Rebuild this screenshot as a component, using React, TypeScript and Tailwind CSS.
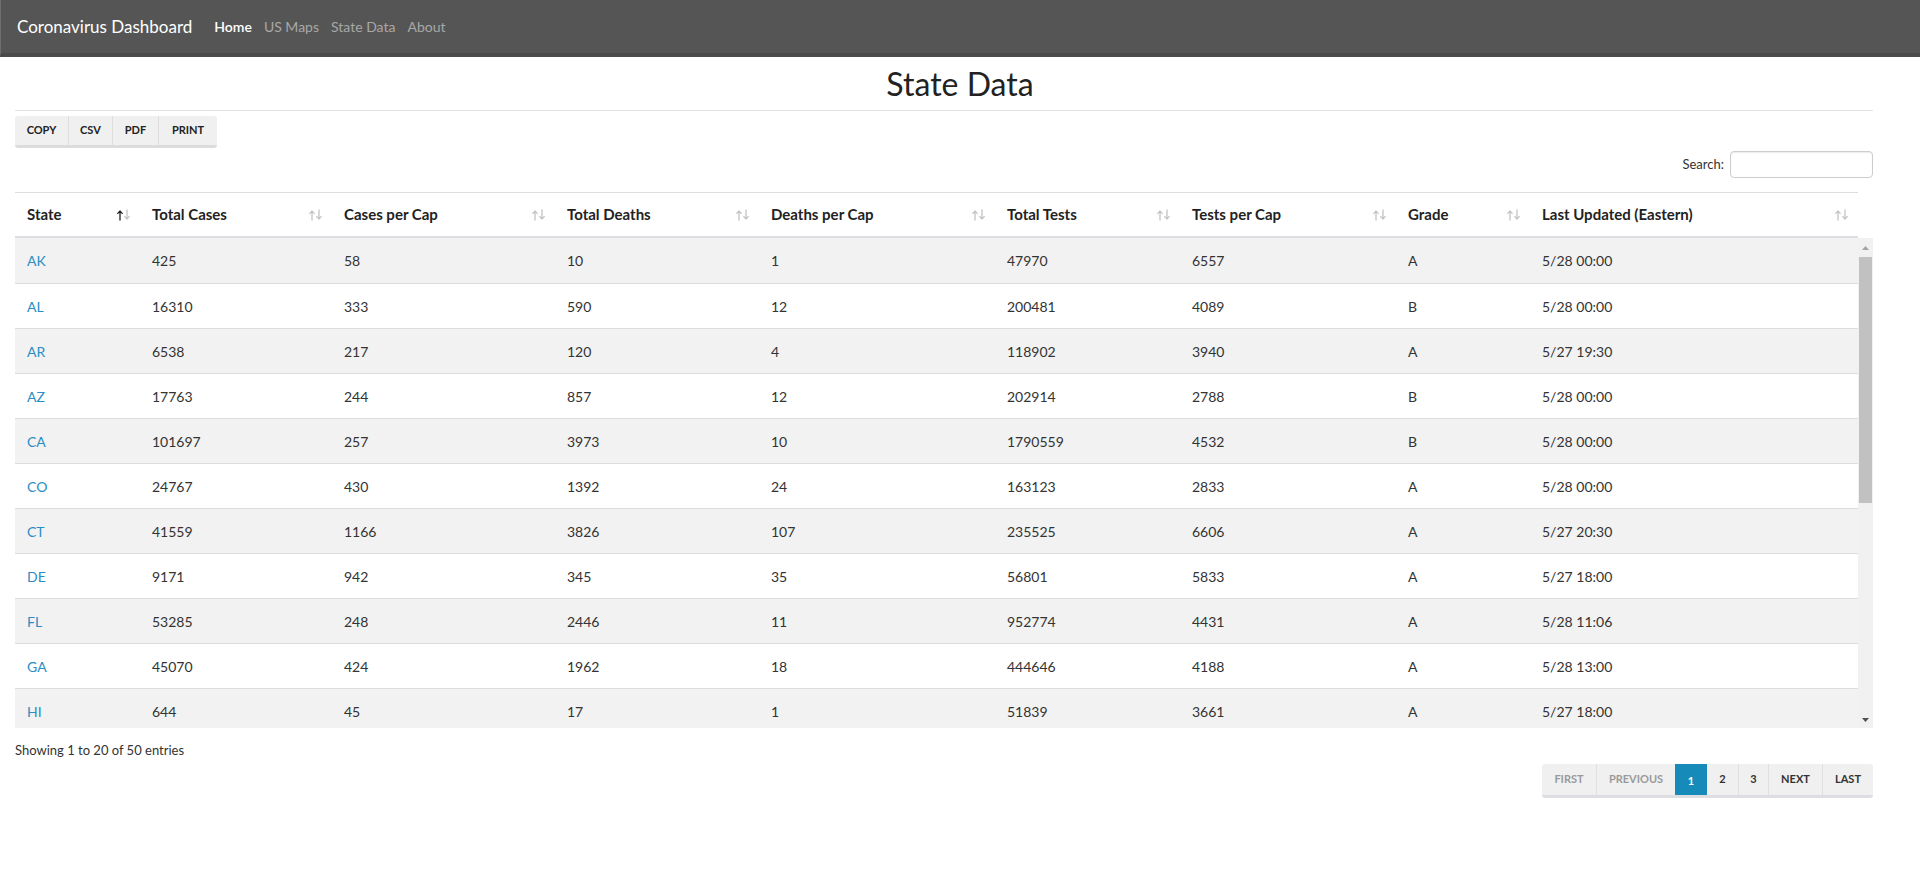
import React from 'react';

type Row = [string, number, number, number, number, number, number, string, string];

const ROWS: Row[] = [
  ['AK', 425, 58, 10, 1, 47970, 6557, 'A', '5/28 00:00'],
  ['AL', 16310, 333, 590, 12, 200481, 4089, 'B', '5/28 00:00'],
  ['AR', 6538, 217, 120, 4, 118902, 3940, 'A', '5/27 19:30'],
  ['AZ', 17763, 244, 857, 12, 202914, 2788, 'B', '5/28 00:00'],
  ['CA', 101697, 257, 3973, 10, 1790559, 4532, 'B', '5/28 00:00'],
  ['CO', 24767, 430, 1392, 24, 163123, 2833, 'A', '5/28 00:00'],
  ['CT', 41559, 1166, 3826, 107, 235525, 6606, 'A', '5/27 20:30'],
  ['DE', 9171, 942, 345, 35, 56801, 5833, 'A', '5/27 18:00'],
  ['FL', 53285, 248, 2446, 11, 952774, 4431, 'A', '5/28 11:06'],
  ['GA', 45070, 424, 1962, 18, 444646, 4188, 'A', '5/28 13:00'],
  ['HI', 644, 45, 17, 1, 51839, 3661, 'A', '5/27 18:00'],
  ['IA', 18672, 592, 506, 16, 143085, 4535, 'A', '5/28 10:00'],
  ['ID', 2769, 155, 82, 5, 48262, 2701, 'A', '5/27 19:00'],
  ['IL', 113195, 893, 4923, 39, 898259, 7089, 'A', '5/28 11:00'],
  ['IN', 32437, 482, 2004, 30, 251425, 3735, 'A', '5/27 23:59'],
  ['KS', 9719, 334, 208, 7, 85081, 2920, 'A', '5/28 09:00'],
  ['KY', 9077, 203, 409, 9, 216290, 4841, 'A', '5/27 17:00'],
  ['LA', 38497, 828, 2646, 57, 393810, 8471, 'A', '5/27 20:00'],
  ['MA', 94220, 1367, 6548, 95, 621633, 9019, 'B', '5/27 16:00'],
  ['MD', 49709, 822, 2392, 40, 271875, 4497, 'A', '5/28 10:00'],
];

const HEADERS = [
  'State',
  'Total Cases',
  'Cases per Cap',
  'Total Deaths',
  'Deaths per Cap',
  'Total Tests',
  'Tests per Cap',
  'Grade',
  'Last Updated (Eastern)',
];

const COLS = 'grid grid-cols-[125px_192px_223px_204px_236px_185px_216px_134px_328px]';

function SortIcon({ active }: { active?: boolean }) {
  const up = active ? '#222' : '#c4c4c4';
  return (
    <svg width="13" height="12" viewBox="0 0 13 12" fill="none" strokeWidth="1.3" strokeLinecap="round">
      <path d="M3 11V2M0.8 4.4L3 2l2.2 2.4" stroke={up} />
      <path d="M10 1v9M7.8 7.6L10 10l2.2-2.4" stroke="#c4c4c4" />
    </svg>
  );
}

function Navbar() {
  return (
    <nav className="h-[57px] bg-[#555555] border-b-4 border-[#4a4a4a] border-l border-l-[#6e6e6e] flex items-center pl-[16px]">
      <span className="text-[17px] text-white">Coronavirus Dashboard</span>
      <div className="flex items-center gap-[12px] ml-[22px] text-[14px]">
        <a className="text-white font-semibold">Home</a>
        <a className="text-[#a8a8a8]">US Maps</a>
        <a className="text-[#a8a8a8]">State Data</a>
        <a className="text-[#a8a8a8]">About</a>
      </div>
    </nav>
  );
}

// stands in for the classic browser scrollbar shown beside the table body
function ScrollTrack() {
  return (
    <div className="w-[15px] h-full bg-[#f1f1f1] flex flex-col items-center">
      <div className="h-[19px] flex items-center justify-center">
        <svg width="7" height="4" viewBox="0 0 7 4">
          <path d="M0 4L3.5 0L7 4Z" fill="#a3a3a3" />
        </svg>
      </div>
      <div className="w-[13px] h-[246px] bg-[#c1c1c1]" />
      <div className="flex-1" />
      <div className="h-[17px] flex items-center justify-center">
        <svg width="7" height="4" viewBox="0 0 7 4">
          <path d="M0 0L7 0L3.5 4Z" fill="#505050" />
        </svg>
      </div>
    </div>
  );
}

export default function App() {
  const buttons = ['COPY', 'CSV', 'PDF', 'PRINT'];
  const btnW = ['w-[54px]', 'w-[44px]', 'w-[46px]', 'w-[58px]'];
  return (
    <div className="min-h-screen bg-white text-[#333] font-['Lato','Liberation_Sans',sans-serif]">
      <Navbar />
      <div className="h-[53px] flex items-center justify-center">
        <h1 className="text-[32px] leading-[38px] text-[#222]">State Data</h1>
      </div>

      <div className="ml-[15px] w-[1858px]">
        <div className="border-t border-[#e3e3e3]" />

        <div className="mt-[5px] inline-flex rounded-[3px] bg-[#f0f0f0] border-b-[3px] border-[#dcdcdc] overflow-hidden">
          {buttons.map((b, i) => (
            <button
              key={b}
              className={`${btnW[i]} h-[29px] text-[11px] font-bold text-[#222] ${i < 3 ? 'border-r border-[#dedede]' : ''}`}
            >
              {b}
            </button>
          ))}
        </div>

        <div className="mt-[3px] flex justify-end items-center gap-[6px]">
          <label className="text-[13px] text-[#333]">Search:</label>
          <input className="w-[143px] h-[27px] border border-[#cccccc] rounded-[4px] shadow-[inset_0_1px_1px_rgba(0,0,0,0.08)] outline-none px-2 text-[13px]" />
        </div>

        <div className="mt-[14px] w-[1843px] border-t border-[#dddddd]">
          <div className={`${COLS} h-[45px] border-b-2 border-[#dcdee2]`}>
            {HEADERS.map((h, i) => (
              <div key={h} className="flex items-center justify-between pl-[12px] pr-[10px]">
                <span className="text-[15px] font-bold text-[#222]">{h}</span>
                <SortIcon active={i === 0} />
              </div>
            ))}
          </div>
        </div>

        <div className="h-[490px] flex">
          <div className="w-[1843px] h-full overflow-hidden">
            {ROWS.map((r, ri) => (
              <div
                key={r[0]}
                className={`${COLS} h-[45px] ${ri > 0 ? 'border-t border-[#dddddd]' : ''} ${ri % 2 === 0 ? 'bg-[#f2f2f2]' : 'bg-white'}`}
              >
                {r.map((c, ci) => (
                  <div key={ci} className="flex items-center pl-[12px] text-[14px]">
                    {ci === 0 ? <a className="text-[#2a8dc5]">{c}</a> : <span>{c}</span>}
                  </div>
                ))}
              </div>
            ))}
          </div>
          <ScrollTrack />
        </div>

        <div className="mt-[12px] text-[13px] leading-[20px] text-[#333]">Showing 1 to 20 of 50 entries</div>

        <div className="mt-[4px] flex justify-end">
          <div className="flex rounded-[3px] overflow-hidden bg-[#f0f0f0] border-b-[3px] border-[#dcdee2] text-[11px] font-bold">
            <span className="w-[55px] h-[31px] flex items-center justify-center text-[#9a9a9a] border-r border-[#e0e0e0]">FIRST</span>
            <span className="w-[78px] h-[31px] flex items-center justify-center text-[#9a9a9a]">PREVIOUS</span>
            <span className="w-[32px] h-[34px] -mb-[3px] flex items-center justify-center bg-[#168bba] text-white border-b-[3px] border-[#12729a] pt-[3px]">1</span>
            <span className="w-[32px] h-[31px] flex items-center justify-center text-[#333] border-r border-[#e0e0e0]">2</span>
            <span className="w-[30px] h-[31px] flex items-center justify-center text-[#333] border-r border-[#e0e0e0]">3</span>
            <span className="w-[54px] h-[31px] flex items-center justify-center text-[#333] border-r border-[#e0e0e0]">NEXT</span>
            <span className="w-[50px] h-[31px] flex items-center justify-center text-[#333]">LAST</span>
          </div>
        </div>
      </div>
    </div>
  );
}
